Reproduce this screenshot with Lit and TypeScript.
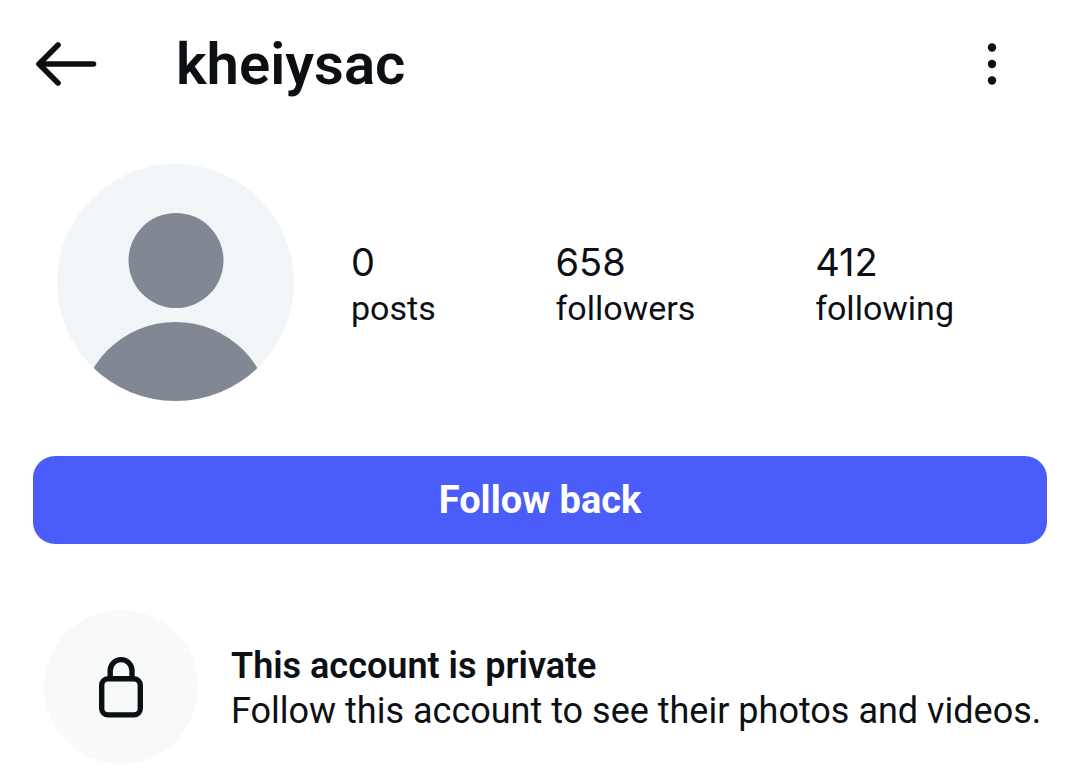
import { LitElement, html, css } from "lit";
import { customElement, property } from "lit/decorators.js";

interface Stat {
  value: number;
  label: string;
}

@customElement("app-root")
export class AppRoot extends LitElement {
  @property() username = "kheiysac";

  stats: Stat[] = [
    { value: 0, label: "posts" },
    { value: 658, label: "followers" },
    { value: 412, label: "following" },
  ];

  static styles = css`
    :host {
      display: block;
      min-height: 100vh;
      background: #fff;
      color: #0c1014;
      font-family: Roboto, "Liberation Sans", sans-serif;
    }
    * {
      box-sizing: border-box;
    }
    button {
      margin: 0;
      padding: 0;
      border: 0;
      background: none;
      color: inherit;
      font: inherit;
      cursor: pointer;
    }
    svg {
      display: block;
    }
    h1,
    h2,
    p,
    dl,
    dd {
      margin: 0;
    }
    .bar {
      display: flex;
      align-items: center;
      height: 128px;
      padding: 0 56px 0 32px;
    }
    .title {
      flex: 1;
      margin-left: 76px;
      font-size: 58px;
      line-height: 62px;
      font-weight: 600;
    }
    .profile {
      display: flex;
      align-items: center;
      padding: 36px 126px 0 57px;
    }
    .avatar {
      flex: none;
      margin-right: 57px;
    }
    .stats {
      flex: 1;
      display: flex;
      justify-content: space-between;
      padding-top: 3px;
    }
    .stat {
      display: flex;
      flex-direction: column-reverse;
    }
    .value {
      font-family: Inter, Roboto, sans-serif;
      font-size: 38px;
      line-height: 48px;
    }
    .label {
      font-size: 34px;
      line-height: 44px;
    }
    .actions {
      padding: 55px 33px 0;
    }
    .follow {
      display: block;
      width: 100%;
      height: 88px;
      border-radius: 22px;
      background: #4a5df9;
      color: #fff;
      font-size: 38px;
      font-weight: 700;
    }
    .notice {
      display: flex;
      align-items: center;
      gap: 33px;
      padding: 66px 33px 10px 44px;
    }
    .badge {
      flex: none;
      display: grid;
      place-items: center;
      width: 154px;
      height: 154px;
      border-radius: 50%;
      background: #f8faf9;
    }
    .message {
      padding-top: 3px;
    }
    .heading,
    .text {
      font-size: 36px;
      line-height: 45px;
      font-weight: 400;
    }
    .heading {
      font-weight: 600;
    }
  `;

  render() {
    return html`
      <header class="bar">
        <button aria-label="Back">
          <svg width="68" height="56" viewBox="0 0 68 56" fill="none" stroke="currentColor"
            stroke-width="5.6" stroke-linecap="round" stroke-linejoin="round">
            <path d="M61.5 28H7M26 9 7 28l19 19" />
          </svg>
        </button>
        <h1 class="title">${this.username}</h1>
        <button aria-label="More options">
          <svg width="64" height="56" viewBox="0 0 64 56" fill="currentColor">
            <circle cx="32" cy="11.5" r="4.2" />
            <circle cx="32" cy="28" r="4.2" />
            <circle cx="32" cy="44.5" r="4.2" />
          </svg>
        </button>
      </header>
      <main>
        <section class="profile">
          <svg class="avatar" width="237" height="237" viewBox="0 0 237 237" role="img" aria-label="Profile picture">
            <clipPath id="round"><circle cx="118.5" cy="118.5" r="118.5" /></clipPath>
            <g clip-path="url(#round)">
              <rect width="237" height="237" fill="#f2f5f7" />
              <circle cx="119" cy="96.5" r="47.5" fill="#818893" />
              <circle cx="118.5" cy="254" r="96" fill="#818893" />
            </g>
          </svg>
          <dl class="stats">
            ${this.stats.map(
              (s) => html`<div class="stat">
                <dt class="label">${s.label}</dt>
                <dd class="value">${s.value}</dd>
              </div>`
            )}
          </dl>
        </section>
        <div class="actions"><button class="follow">Follow back</button></div>
        <section class="notice">
          <div class="badge">
            <svg width="48" height="64" viewBox="0 0 48 64" fill="none" stroke="currentColor" stroke-width="5.4">
              <rect x="4.7" y="23.7" width="38.6" height="36.2" rx="6.5" />
              <path d="M13.2 23.7V15.5a10.9 10.9 0 0 1 21.8 0v8.2" />
            </svg>
          </div>
          <div class="message">
            <h2 class="heading">This account is private</h2>
            <p class="text">Follow this account to see their photos and videos.</p>
          </div>
        </section>
      </main>
    `;
  }
}
